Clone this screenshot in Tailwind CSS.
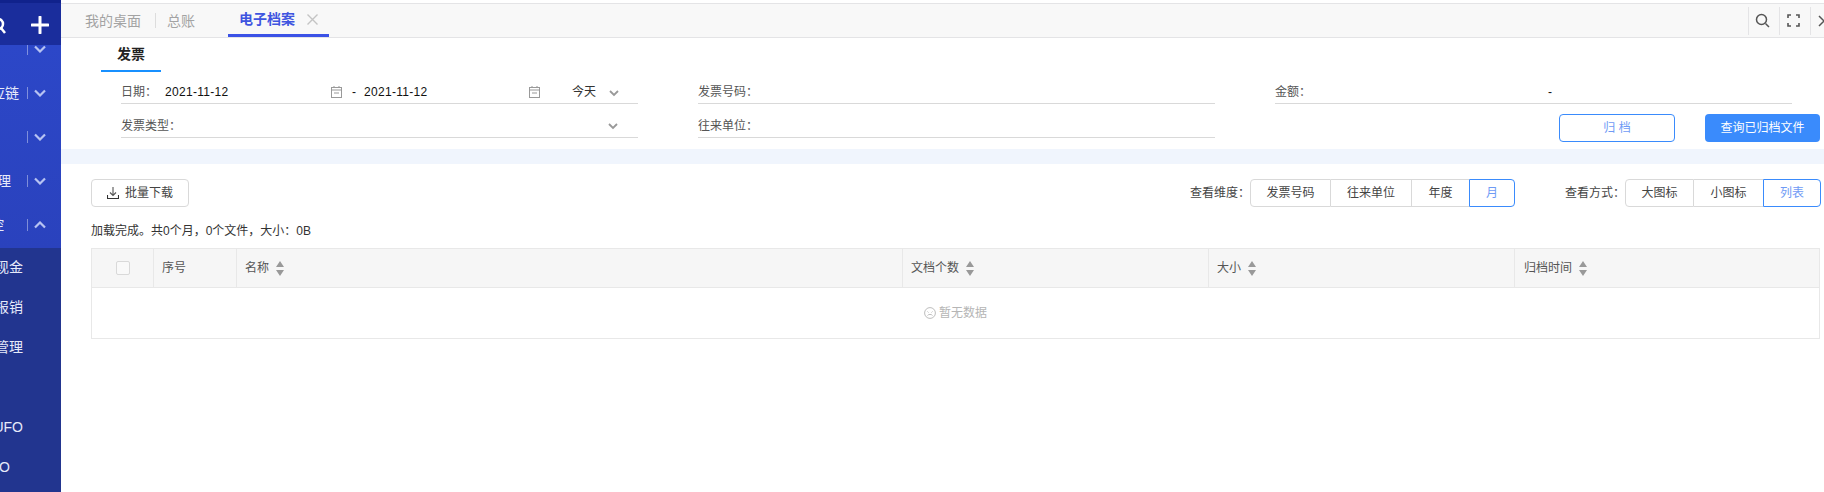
<!DOCTYPE html>
<html lang="zh-CN">
<head>
    <meta charset="UTF-8">
    <title>电子档案</title>
    <script src="https://cdn.jsdelivr.net/npm/@tailwindcss/browser@4"></script>
</head>
<body class="bg-white h-[492px] w-[1824px] overflow-hidden flex font-['Liberation_Sans','Noto_Sans_CJK_SC',sans-serif] text-xs text-[#333]">

<!-- sidebar -->
<aside class="w-[61px] h-full shrink-0 overflow-hidden flex flex-col bg-[#22358f] text-[#e6eafa] text-sm">
    <div class="h-[45px] shrink-0 relative z-10 bg-[#1a2d9c] border-t-[3px] border-[#10228c] flex items-center justify-end pr-[12px] pt-[2px]">
        <svg class="absolute left-[-8px] top-[14px]" width="16" height="18" viewBox="0 0 16 18" fill="none" stroke="#fff" stroke-width="2.500"><circle cx="6" cy="7" r="5"/><path d="M9 11l4 5"/></svg>
        <svg width="18" height="18" viewBox="0 0 18 18" stroke="#fff" stroke-width="3" stroke-linecap="round"><path d="M9 1v16M1 9h16"/></svg>
    </div>
    <div class="h-[203px] shrink-0 bg-gradient-to-b from-[#2c47c8] to-[#2a42bd]">
        <div class="mt-[-18px] flex flex-col">
            <div class="h-[44px] flex items-center justify-end pr-[15px] gap-[6px]">
                <span class="w-px h-[12px] shrink-0 bg-white/40"></span>
                <svg class="shrink-0" width="12" height="8" viewBox="0 0 12 8" fill="none" stroke="#b7c3f2" stroke-width="2.200"><path d="M1 1.500l5 5 5-5"/></svg>
            </div>
            <div class="h-[44px] flex items-center justify-end pr-[15px] gap-[6px]">
                <span class="shrink-0 whitespace-nowrap mr-[2px]">供应链</span>
                <span class="w-px h-[12px] shrink-0 bg-white/40"></span>
                <svg class="shrink-0" width="12" height="8" viewBox="0 0 12 8" fill="none" stroke="#b7c3f2" stroke-width="2.200"><path d="M1 1.500l5 5 5-5"/></svg>
            </div>
            <div class="h-[44px] flex items-center justify-end pr-[15px] gap-[6px]">
                <span class="w-px h-[12px] shrink-0 bg-white/40"></span>
                <svg class="shrink-0" width="12" height="8" viewBox="0 0 12 8" fill="none" stroke="#b7c3f2" stroke-width="2.200"><path d="M1 1.500l5 5 5-5"/></svg>
            </div>
            <div class="h-[44px] flex items-center justify-end pr-[15px] gap-[6px]">
                <span class="shrink-0 whitespace-nowrap mr-[10px]">管理</span>
                <span class="w-px h-[12px] shrink-0 bg-white/40"></span>
                <svg class="shrink-0" width="12" height="8" viewBox="0 0 12 8" fill="none" stroke="#b7c3f2" stroke-width="2.200"><path d="M1 1.500l5 5 5-5"/></svg>
            </div>
            <div class="h-[44px] flex items-center justify-end pr-[15px] gap-[6px]">
                <span class="shrink-0 whitespace-nowrap mr-[17px]">费控</span>
                <span class="w-px h-[12px] shrink-0 bg-white/40"></span>
                <svg class="shrink-0" width="12" height="8" viewBox="0 0 12 8" fill="none" stroke="#b7c3f2" stroke-width="2.200"><path d="M1 6.500l5-5 5 5"/></svg>
            </div>
        </div>
    </div>
    <div class="flex flex-col mt-[-1px]">
        <div class="h-[40px] flex items-center justify-end pr-[38px] whitespace-nowrap">报现金</div>
        <div class="h-[40px] flex items-center justify-end pr-[38px] whitespace-nowrap">费用报销</div>
        <div class="h-[40px] flex items-center justify-end pr-[38px] whitespace-nowrap">档案管理</div>
        <div class="h-[40px]"></div>
        <div class="h-[40px] flex items-center justify-end pr-[38px] whitespace-nowrap">UFO</div>
        <div class="h-[40px] flex items-center justify-end pr-[51px] whitespace-nowrap">UFO</div>
    </div>
</aside>

<main class="flex-1 min-w-0 flex flex-col">
    <!-- tab bar -->
    <div class="h-[35px] mt-[3px] shrink-0 bg-[#f8f8f8] border-t border-b border-[#e4e4e6] flex items-center text-sm text-[#a3a3a3]">
        <span class="ml-[24px]">我的桌面</span>
        <span class="w-px h-[15px] bg-[#ddd] ml-[14px]"></span>
        <span class="ml-[11px]">总账</span>
        <div class="ml-[33px] w-[101px] h-[33px] border-b-[3px] border-[#3b52e6] flex items-center pl-[11px]">
            <span class="font-bold text-[#3f55e0]">电子档案</span>
            <svg class="ml-[12px]" width="11" height="11" viewBox="0 0 11 11" stroke="#c4c4c4" stroke-width="1.400"><path d="M.5.5l10 10M10.500.5l-10 10"/></svg>
        </div>
        <div class="ml-auto flex items-center h-[30px] overflow-hidden">
            <div class="w-[31px] h-[28px] border-l border-[#e4e4e6] flex items-center justify-center pr-[4px]">
                <svg width="15" height="15" viewBox="0 0 15 15" fill="none" stroke="#555" stroke-width="1.500"><circle cx="6.500" cy="6.500" r="5"/><path d="M10.500 10.500l3.500 3.500"/></svg>
            </div>
            <div class="w-[31px] h-[28px] border-l border-[#e4e4e6] flex items-center justify-center pr-[3px]">
                <svg width="13" height="13" viewBox="0 0 13 13" fill="none" stroke="#555" stroke-width="1.600"><path d="M1 4V1h3M9 1h3v3M12 9v3H9M4 12H1V9"/></svg>
            </div>
            <div class="w-[14px] h-[28px] border-l border-[#e4e4e6] flex items-center pl-[7px] overflow-hidden">
                <svg class="shrink-0" width="12" height="12" viewBox="0 0 12 12" stroke="#555" stroke-width="1.500"><path d="M1 1l10 10M11 1L1 11"/></svg>
            </div>
        </div>
    </div>

    <!-- filter section -->
    <section class="h-[111px] shrink-0">
        <div class="ml-[40px] w-[60px] h-[34px] border-b-2 border-[#1890ff] flex items-center justify-center text-sm font-bold text-[#222]">发票</div>
        <div class="ml-[60px] mr-[4px] grid grid-cols-[517px_517px_1fr] grid-rows-[32px_34px] gap-x-[60px]">
            <div class="border-b border-[#d9d9d9] flex items-end pb-[2px]">
                <span class="text-[#555] w-[44px] leading-[18px]">日期：</span>
                <span class="text-[#111] leading-[18px] tracking-[0.3px] w-[166px]">2021-11-12</span>
                <svg class="mb-[3px]" width="11" height="12" viewBox="0 0 11 12" fill="none" stroke="#999"><rect x=".5" y="1.500" width="10" height="10"/><path d="M.5 4h10M3 0v2M8 0v2M3 7h5"/></svg>
                <span class="ml-[10px] leading-[18px] text-[#111]">-</span>
                <span class="ml-[8px] text-[#111] leading-[18px] tracking-[0.3px] w-[165px]">2021-11-12</span>
                <svg class="mb-[3px]" width="11" height="12" viewBox="0 0 11 12" fill="none" stroke="#999"><rect x=".5" y="1.500" width="10" height="10"/><path d="M.5 4h10M3 0v2M8 0v2M3 7h5"/></svg>
                <span class="ml-[32px] leading-[18px] text-[#333]">今天</span>
                <svg class="ml-[13px] mb-[4px]" width="10" height="7" viewBox="0 0 10 7" fill="none" stroke="#999" stroke-width="1.800"><path d="M1 1l4 4 4-4"/></svg>
            </div>
            <div class="border-b border-[#d9d9d9] flex items-end pb-[2px]">
                <span class="text-[#555] leading-[18px]">发票号码：</span>
            </div>
            <div class="w-[517px] border-b border-[#d9d9d9] flex items-end pb-[2px]">
                <span class="text-[#555] leading-[18px] w-[273px]">金额：</span>
                <span class="text-[#111] leading-[18px]">-</span>
            </div>
            <div class="border-b border-[#d9d9d9] flex items-end justify-between pb-[2px]">
                <span class="text-[#555] leading-[18px]">发票类型：</span>
                <svg class="mr-[20px] mb-[5px]" width="10" height="7" viewBox="0 0 10 7" fill="none" stroke="#999" stroke-width="1.800"><path d="M1 1l4 4 4-4"/></svg>
            </div>
            <div class="border-b border-[#d9d9d9] flex items-end pb-[2px]">
                <span class="text-[#555] leading-[18px]">往来单位：</span>
            </div>
            <div class="flex justify-end gap-[30px] pt-[10px]">
                <button class="w-[116px] h-[28px] shrink-0 rounded-[4px] border border-[#3a8bfc] text-[#6f9bf5] bg-white">归 档</button>
                <button class="w-[115px] h-[28px] shrink-0 rounded-[4px] bg-[#3a8bfc] text-white">查询已归档文件</button>
            </div>
        </div>
    </section>

    <div class="h-[15px] shrink-0 bg-[#f0f5fd]"></div>

    <!-- toolbar -->
    <section class="ml-[30px] mr-[3px] mt-[15px] flex flex-col">
        <div class="flex items-center h-[28px]">
            <button class="w-[98px] h-[28px] rounded-[4px] border border-[#d9d9d9] flex items-center justify-center gap-[6px] text-[#444]">
                <svg width="12" height="12" viewBox="0 0 12 12" fill="none" stroke="#555" stroke-width="1.100"><path d="M6 0v8M3 5.500L6 8.500l3-3"/><path d="M.5 8v3.500h11V8" stroke="#333"/></svg>
                批量下载
            </button>
            <span class="ml-auto text-[#444]">查看维度：</span>
            <div class="flex h-[28px]">
                <span class="w-[81px] rounded-l-[4px] border border-[#d9d9d9] flex items-center justify-center text-[#444]">发票号码</span>
                <span class="w-[81px] border-y border-r border-[#d9d9d9] flex items-center justify-center text-[#444]">往来单位</span>
                <span class="w-[57px] border-y border-[#d9d9d9] flex items-center justify-center text-[#444]">年度</span>
                <span class="w-[46px] rounded-r-[4px] border border-[#3a8bfc] flex items-center justify-center text-[#6f9bf5]">月</span>
            </div>
            <span class="ml-[50px] text-[#444]">查看方式：</span>
            <div class="flex h-[28px]">
                <span class="w-[69px] rounded-l-[4px] border border-[#d9d9d9] flex items-center justify-center text-[#444]">大图标</span>
                <span class="w-[69px] border-y border-[#d9d9d9] flex items-center justify-center text-[#444]">小图标</span>
                <span class="w-[58px] rounded-r-[4px] border border-[#3a8bfc] flex items-center justify-center text-[#6f9bf5]">列表</span>
            </div>
        </div>
        <div class="h-[41px] flex items-center pt-[7px] text-[#333]">加载完成。共0个月，0个文件，大小：0B</div>

        <!-- table -->
        <div class="border border-[#e8e8e8] mr-[1px]">
            <div class="grid grid-cols-[61px_83px_666px_306px_306px_1fr] h-[39px] bg-[#f6f6f6] border-b border-[#e8e8e8] text-[#555]">
                <div class="flex items-center justify-center">
                    <span class="w-[14px] h-[14px] bg-white/40 border border-[#d9d9d9] rounded-[2px]"></span>
                </div>
                <div class="border-l border-[#e8e8e8] flex items-center pl-[8px]">序号</div>
                <div class="border-l border-[#e8e8e8] flex items-center pl-[8px] gap-[7px]">名称
                    <svg width="8" height="15" viewBox="0 0 8 15" fill="#999"><path d="M4 0l4 6H0zM4 15l4-6H0z"/></svg>
                </div>
                <div class="border-l border-[#e8e8e8] flex items-center pl-[8px] gap-[7px]">文档个数
                    <svg width="8" height="15" viewBox="0 0 8 15" fill="#999"><path d="M4 0l4 6H0zM4 15l4-6H0z"/></svg>
                </div>
                <div class="border-l border-[#e8e8e8] flex items-center pl-[8px] gap-[7px]">大小
                    <svg width="8" height="15" viewBox="0 0 8 15" fill="#999"><path d="M4 0l4 6H0zM4 15l4-6H0z"/></svg>
                </div>
                <div class="border-l border-[#e8e8e8] flex items-center pl-[9px] gap-[7px]">归档时间
                    <svg width="8" height="15" viewBox="0 0 8 15" fill="#999"><path d="M4 0l4 6H0zM4 15l4-6H0z"/></svg>
                </div>
            </div>
            <div class="h-[50px] flex items-center justify-center gap-[3px] text-[#b5b5b5]">
                <svg width="12" height="12" viewBox="0 0 12 12" fill="none" stroke="#b5b5b5" stroke-width=".9"><circle cx="6" cy="6" r="5.400"/><path d="M3.500 8.500c1-1.500 4-1.500 5 0M3.500 4.500l1 1M8.500 4.500l-1 1"/></svg>
                暂无数据
            </div>
        </div>
    </section>
</main>
</body>
</html>
